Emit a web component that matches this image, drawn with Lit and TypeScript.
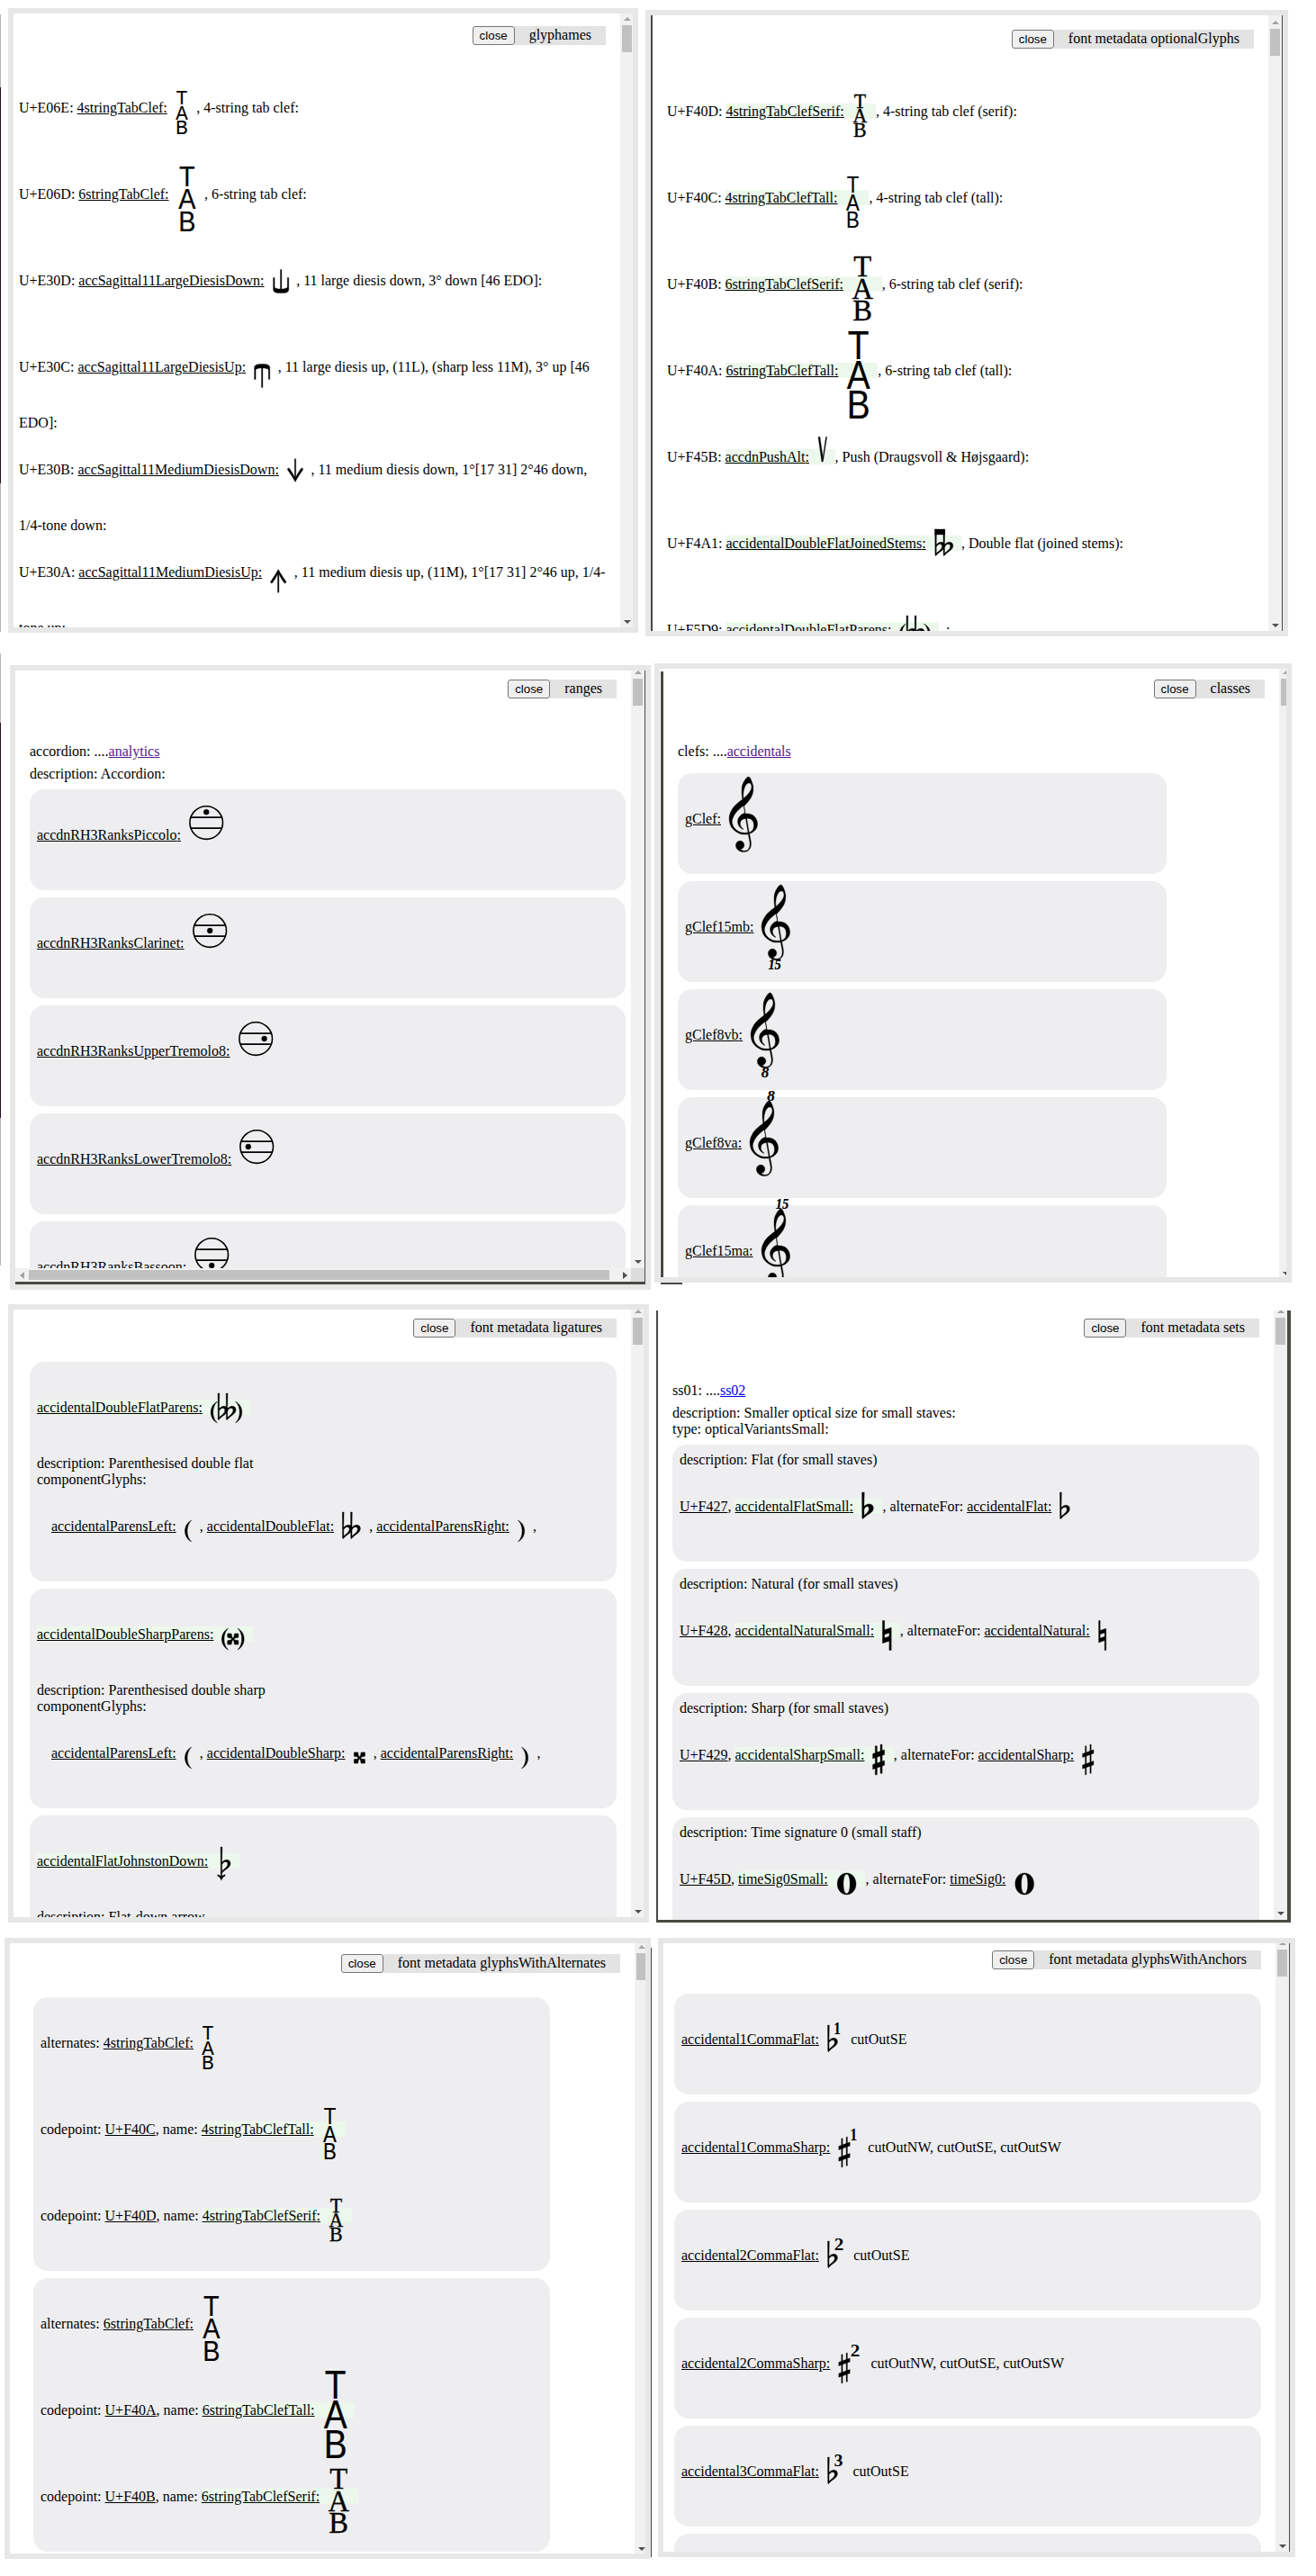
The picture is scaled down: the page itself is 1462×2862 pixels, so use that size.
import { LitElement, html, css, svg, nothing } from "lit";
import type { TemplateResult, SVGTemplateResult } from "lit";
import { customElement, property } from "lit/decorators.js";

type Art = SVGTemplateResult;
interface Glyph { w: number; art: Art; }

const at = (x: number, art: Art, extra = "") =>
  svg`<g transform=${`translate(${x} 0) ${extra}`}>${art}</g>`;

/* ---- primitive shapes: y = 0 is the text baseline ---- */
const flat = svg`<path fill-rule="evenodd" d="M0.1 -21H1.9L1.6 -3.9C3 -5.6 4.9 -6.7 6.9 -6.7C9.4 -6.7 11 -5.1 11 -2.7C11 2.2 4.8 4 1.7 7.9C1.1 8.7 0.4 8.6 0.3 7.7ZM1.6 -1.4C2.8 -3.6 4.2 -4.5 5.6 -4.5C7.2 -4.5 7.9 -3.5 7.9 -1.9C7.9 1.2 4 3.6 1.7 5.8Z"/>`;
const flatSmall = svg`<path fill-rule="evenodd" d="M0.2 -21H2.8L2.5 -5.2C4.2 -7.2 6 -8 8.2 -8C11 -8 13 -6 13 -3.4C13 2 6 3.4 2.4 7.4C1.4 8.6 0.5 8.6 0.4 7.5ZM2.5 -1.8C3.4 -4 4.6 -5.2 6 -5.2C7.4 -5.2 8 -4.2 8 -2.6C8 0.4 4.6 2.8 2.6 4.6Z"/>`;
const doubleFlat = svg`${flat}${at(9.2, flat)}`;
const joinedFlat = svg`${doubleFlat}<rect x="0.1" y="-21" width="11" height="6"/>`;
const paren = svg`<path d="M7 -11.8C-2.4 -7.2 -2.4 7.2 7 11.8C0.9 6.6 0.9 -6.6 7 -11.8Z" stroke-width=".5"/>`;
const parenRight = at(7, paren, "scale(-1 1)");
const doubleSharp = svg`<path d="M-6 -6H-2.2C-1.7 -6 -1.6 -5.8 -1.6 -5.2C-1.6 -3.2 -0.9 -1.9 0 -0.9C0.9 -1.9 1.6 -3.2 1.6 -5.2C1.6 -5.8 1.7 -6 2.2 -6H6V-2.2C6 -1.7 5.8 -1.6 5.2 -1.6C3.2 -1.6 1.9 -0.9 0.9 0C1.9 0.9 3.2 1.6 5.2 1.6C5.8 1.6 6 1.7 6 2.2V6H2.2C1.7 6 1.6 5.8 1.6 5.2C1.6 3.2 0.9 1.9 0 0.9C-0.9 1.9 -1.6 3.2 -1.6 5.2C-1.6 5.8 -1.7 6 -2.2 6H-6V2.2C-6 1.7 -5.8 1.6 -5.2 1.6C-3.2 1.6 -1.9 0.9 -0.9 0C-1.9 -0.9 -3.2 -1.6 -5.2 -1.6C-5.8 -1.6 -6 -1.7 -6 -2.2Z" stroke-width=".6"/>`;
const johnstonDown = svg`${at(4, flat)}<path d="M4.9 6V14.6M0.6 10.4C2.6 10.8 4 12 4.9 14.4C5.8 12 7.2 10.8 9.2 10.4" fill="none" stroke-width="1.6"/>`;
const natural = svg`<path fill-rule="evenodd" d="M0.2 -16.4H1.8V-5.4L8.4 -7.8V16.4H6.8V5.6L0.2 8ZM1.8 -1.2L6.8 -3V1.3L1.8 3.1Z"/>`;
const naturalSmall = svg`<path fill-rule="evenodd" d="M0 -16.4H2.3V-6.2L9.8 -8.8V16.4H7.5V6.2L0 8.8ZM2.3 -1L7.5 -2.8V1L2.3 2.8Z"/>`;
const sharp = svg`<path d="M0 -6.6L12.4 -11V-6.9L0 -2.4ZM0 6L12.4 1.6V5.8L0 10.2ZM3 -15.2H4.3V16.8H3ZM8.3 -16.8H9.6V15.2H8.3Z"/>`;
const sharpSmall = svg`<path d="M0 -6.6L13 -11V-5.6L0 -1.2ZM0 5.4L13 1V6.2L0 10.8ZM2.7 -15.2H4.8V16.8H2.7ZM8.4 -16.8H10.5V15.2H8.4Z"/>`;
const zero = svg`<path fill-rule="evenodd" d="M10.4 -12C16.4 -12 20.8 -6.8 20.8 0S16.4 12 10.4 12S0 6.8 0 0S4.4 -12 10.4 -12ZM10.4 -10.8C8 -10.8 6.8 -6 6.8 0S8 10.8 10.4 10.8S14 6 14 0S12.8 -10.8 10.4 -10.8Z"/>`;

const clef = svg`<path transform="scale(.048 -.048)" stroke-width="8" fill-rule="evenodd" d="M441 -245c-23 -4 -48 -6 -76 -6c-59 0 -102 7 -130 20c-88 42 -150 93 -187 154c-26 44 -43 103 -48 176c0 6 -1 13 -1 19c0 54 15 111 45 170c29 57 65 106 110 148s96 85 153 127c-3 16 -8 46 -13 92c-4 43 -5 73 -5 89c0 117 16 172 69 257c34 54 64 82 89 82c21 0 43 -30 69 -92s39 -115 41 -159v-15c0 -109 -21 -162 -67 -241c-20 -33 -61 -84 -123 -150c-7 -7 -14 -15 -21 -22l30 -177c11 1 21 2 32 2c54 0 103 -12 142 -36c60 -40 96 -103 103 -179c1 -10 2 -20 2 -29c0 -107 -80 -184 -186 -220c20 -110 38 -170 38 -235c0 -115 -65 -188 -165 -188c-110 0 -190 68 -190 153c0 60 42 105 97 105c55 0 98 -42 98 -97c0 -52 -35 -92 -85 -97c22 -25 50 -38 85 -38c80 0 132 60 132 160c0 55 -20 120 -38 227zM461 939c-95 0 -135 -175 -135 -286c0 -24 2 -48 5 -71c50 39 92 82 127 128c40 53 60 100 60 140v8c-4 53 -22 81 -55 81h-2zM406 119l54 -326c73 25 110 78 110 161c0 7 0 15 -1 23c-7 95 -57 142 -151 142h-12zM382 117c-72 -2 -128 -47 -128 -120v-7c2 -46 43 -99 75 -115c-3 -2 -7 -5 -10 -10c-70 33 -116 88 -123 172v11c0 68 44 126 88 159c23 17 49 29 78 36l-29 170c-21 -13 -52 -37 -92 -73c-50 -44 -86 -84 -109 -119c-45 -69 -67 -130 -67 -182v-5c5 -68 35 -127 93 -176s125 -73 203 -73c25 0 50 3 75 9c-19 111 -36 221 -54 327z"/>`;

const label = (cls: string, size: number, cx: number, y: number, t: string, sx = 1) =>
  svg`<text class=${cls} font-size=${size} text-anchor="middle" transform=${`translate(${cx} ${y}) scale(${sx} 1)`}>${t}</text>`;
const tab = (cls: string, size: number, cx: number, ys: number[], sx: number) =>
  svg`${["T", "A", "B"].map((t, i) => label(cls, size, cx, ys[i], t, sx))}`;

const largeDown = svg`<path d="M0 -8.4H1.5V1.6C1.5 3.4 3.4 3.9 7.9 4.1V-17.4H9.3V4.1C13.8 3.9 15.7 3.4 15.7 1.6V-8.4H17.2V4.4C17.2 7.6 14.6 8.6 8.6 8.6S0 7.6 0 4.4Z"/>`;
const mediumDown = svg`<path d="M7.9 -17.2H9.3V3.2C11.2 -0.8 13.4 -4.6 15.8 -7.2L17.5 -5.8C15 -2 11 3.6 8.6 8.4C6.2 3.6 2.2 -2 -0.3 -5.8L1.4 -7.2C3.8 -4.6 6 -0.8 7.9 3.2Z"/>`;

const ranks = (dx: number, dy: number): Glyph => ({
  w: 60,
  art: svg`<circle cx="28.2" cy="-18.9" r="18.3" fill="none" stroke-width="1.6"/>
    <path d="M11 -24.9H45.4M11 -12.9H45.4" stroke-width="1.6"/>
    <circle cx=${dx} cy=${dy} r="3"/>`,
});
const g = (w: number, x: number, art: Art, more: Art | typeof nothing = nothing): Glyph =>
  ({ w, art: svg`${at(x, art)}${more}` });

const G: Record<string, Glyph> = {
  "4stringTabClef": { w: 32.4, art: tab("sans", 22, 15.9, [-8.8, 7.8, 24.5], 0.92) },
  "6stringTabClef": { w: 39.5, art: tab("sans", 32, 19.8, [-14.3, 10.9, 36], 0.9) },
  "4stringTabClefSerif": { w: 35.2, art: tab("serif", 23, 17.3, [-8.8, 7.3, 23.3], 0.95) },
  "4stringTabClefTall": { w: 35, art: tab("sans", 25.2, 17.4, [-10.6, 8.5, 27.5], 0.88) },
  "6stringTabClefSerif": { w: 42.8, art: tab("serif", 33.6, 21.2, [-14.3, 10.7, 34.8], 0.97) },
  "6stringTabClefTall": { w: 44, art: tab("sans", 44.7, 22.7, [-18.5, 14.8, 48.4], 0.87) },
  accSagittal11LargeDiesisDown: g(35.6, 9.6, largeDown),
  accSagittal11LargeDiesisUp: { w: 35.6, art: at(9.6, largeDown, "scale(1 -1)") },
  accSagittal11MediumDiesisDown: g(35.6, 9.4, mediumDown),
  accSagittal11MediumDiesisUp: { w: 35.6, art: at(9.6, mediumDown, "scale(1 -1)") },
  accdnPushAlt: g(28.6, 9.8, svg`<path d="M0.2 -27.6H2.1L5.4 -5L8.7 -27.6H9.9L5.5 0H4.1Z"/>`),
  accidentalDoubleFlatJoinedStems: g(39.4, 9.6, joinedFlat),
  accidentalDoubleFlatParens: g(52.6, 9.3, svg`${paren}${at(7.6, doubleFlat)}${at(27.4, parenRight)}`),
  accidentalDoubleSharpParens: g(43.8, 9.5, svg`${paren}${at(12.3, doubleSharp)}${at(17.6, parenRight)}`),
  accidentalFlatJohnstonDown: g(34.5, 10, johnstonDown),
  accidentalParensLeft: g(26.2, 9.6, paren),
  accidentalParensRight: g(26.2, 9.6, parenRight),
  accidentalDoubleFlat: g(39.2, 9.2, doubleFlat),
  accidentalDoubleSharp: g(31.2, 15.4, doubleSharp),
  accidentalFlatSmall: g(32.4, 9.4, flatSmall),
  accidentalFlat: g(32, 9.4, flat),
  accidentalNaturalSmall: g(28.6, 9.4, naturalSmall),
  accidentalNatural: g(28, 9.4, natural),
  accidentalSharpSmall: g(32.4, 9.6, sharpSmall),
  accidentalSharp: g(32, 9.6, sharp),
  timeSig0Small: g(41.8, 10.2, zero),
  timeSig0: g(41.8, 10.8, zero),
  accidental1CommaFlat: g(35.4, 9.4, flat, label("num", 19, 20, -10.6, "1", 0.85)),
  accidental1CommaSharp: g(42, 9.8, sharp, label("num", 19, 26.2, -12.8, "1", 0.85)),
  accidental2CommaFlat: g(38.4, 9.4, flat, label("num", 19, 22, -11.2, "2", 1.12)),
  accidental2CommaSharp: g(45.2, 9.8, sharp, label("num", 19, 28, -12.8, "2", 1.12)),
  accidental3CommaFlat: g(37.6, 9.4, flat, label("num", 19, 21.5, -11, "3", 1.05)),
  gClef: g(50, 9.1, clef),
  gClef15mb: g(50, 9.1, clef, label("oct", 17, 23.6, 41.8, "15", 0.85)),
  gClef8vb: g(50, 9.1, clef, label("oct", 17, 25, 41.8, "8")),
  gClef8va: g(50, 9.1, clef, label("oct", 17, 32.4, -52, "8")),
  gClef15ma: g(50, 9.1, clef, label("oct", 17, 32, -52, "15", 0.85)),
  accdnRH3RanksPiccolo: ranks(28.2, -30.8),
  accdnRH3RanksClarinet: ranks(28.2, -19),
  accdnRH3RanksUpperTremolo8: ranks(37.6, -19),
  accdnRH3RanksLowerTremolo8: ranks(18.8, -19),
  accdnRH3RanksBassoon: ranks(28.2, -7),
};

const pic = (name: string) => {
  const q = G[name];
  return html`<svg class="glyph" width=${q.w} height="96" viewBox=${`0 -48 ${q.w} 96`}>${q.art}</svg>`;
};
const ref = (name: string) => html`<a class="ref">${name}:</a>${pic(name)}`;
const opt = (name: string) => html`<span class="optional">${ref(name)}</span>`;
const u = (code: string) => html`<a class="ref">${code}</a>`;

@customElement("glyph-window")
class GlyphWindow extends LitElement {
  @property() heading = "";
  @property({ type: Boolean }) horizontal = false;

  static styles = css`
    :host { display: flex; flex: none; box-sizing: border-box; overflow: hidden; background: #fff;
      font: 16px/18px "Liberation Serif", serif; color: #000; }
    .main { flex: 1; min-width: 0; display: flex; flex-direction: column; box-sizing: border-box;
      border: 0 solid #4a4944; border-right-width: var(--line-right, 0); border-bottom-width: var(--line-bottom, 0); }
    .view { flex: 1; min-height: 0; display: flex; }
    .pane { flex: 1; min-width: 0; overflow: hidden; padding: var(--top) var(--right) 0 var(--left);
      margin: var(--edge-top, 0) 0 0 var(--edge-left, 0); border-left: var(--edge, 0) solid #4a4944; }
    .head { display: flex; justify-content: flex-end; height: 21px; margin-bottom: var(--gap); margin-right: var(--head-right, 0); }
    button { box-sizing: border-box; width: 47px; height: 21px; padding: 0; border: 1px solid #767676;
      border-radius: 3px; background: #efefef; color: #000; font: 13.333px/18px "Liberation Sans", sans-serif; }
    .title { padding: 0 16px; background: #e3e3e3; line-height: 20px; white-space: nowrap; }
    .bar { flex: none; width: var(--bar, 14px); box-sizing: border-box; display: flex; flex-direction: column;
      align-items: flex-start; background: #f1f1f1; overflow: hidden; padding: 0 0 var(--bar-bottom, 4px); }
    .up, .down { flex: none; width: 15px; display: flex; justify-content: center; }
    .up { height: 12px; margin-top: var(--bar-top, 1px); }
    .up svg, .down svg { display: block; margin-top: 3px; }
    .thumb { flex: none; width: 11px; height: 30px; margin-left: 2px; background: #c1c1c1; }
    .grow { flex: 1; }
    .hbar { flex: none; height: 15px; display: flex; align-items: center; background: #f1f1f1; }
    .hthumb { flex: none; width: 645px; height: 11px; margin-left: 5px; background: #c1c1c1; }
    .left { margin-left: 5px; }
    .right { margin-left: 15px; }
    .corner { width: 15px; height: 15px; margin-left: auto; background: #dcdcdc; }
  `;

  render() {
    return html`<div class="main">
      <div class="view">
        <div class="pane">
          <div class="head"><button>close</button><span class="title">${this.heading}</span></div>
          <slot></slot>
        </div>
        <div class="bar">
          <div class="up"><svg width="8" height="4"><path d="M0 4L4 0L8 4Z" fill="#a3a3a3"/></svg></div>
          <div class="thumb"></div>
          <div class="grow"></div>
          <div class="down"><svg width="8" height="4"><path d="M0 0L4 4L8 0Z" fill="#505050"/></svg></div>
        </div>
      </div>
      ${this.horizontal ? html`<div class="hbar">
        <svg class="left" width="5" height="8"><path d="M5 0L0 4L5 8Z" fill="#a3a3a3"/></svg>
        <div class="hthumb"></div>
        <svg class="right" width="5" height="8"><path d="M0 0L5 4L0 8Z" fill="#505050"/></svg>
        <div class="corner"></div></div>` : nothing}
    </div>`;
  }
}

@customElement("app-root")
class AppRoot extends LitElement {
  static styles = css`
    :host { display: block; width: 1462px; height: 2862px; overflow: hidden; background: #fff;
      font: 16px/18px "Liberation Serif", serif; color: #000; }
    .row { display: flex; align-items: flex-start; height: 720px; }
    .row.third { height: 705px; }
    .row.last { height: 717px; }
    .strip { flex: none; width: 1px; height: 686px; margin-top: 16px;
      background: linear-gradient(#b5b3b8 81px, #2b0d24 81px 521px, #b5b3b8 521px); }
    .strip.short { margin-top: 6px; height: 680px;
      background: linear-gradient(#b5b3b8 77px, #2b0d24 77px 516px, #b5b3b8 516px); }

    .w { border: 6px solid #e7e7e7; }
    .names { width: 700px; height: 694px; margin: 9px 0 0 8px; --top: 14px; --left: 6px; --right: 16px; --gap: 27px; }
    .optionals { width: 714px; height: 696px; margin: 11px 0 0 8px; --top: 16px; --left: 16px; --right: 16px; --gap: 27px;
      --edge: 2px; --bar: 15px; --bar-top: 3px; --line-right: 1px; }
    .ranges { width: 712px; height: 694px; margin: 19px 0 0 10px; --top: 10px; --left: 16px; --right: 6px; --head-right: 10px;
      --gap: 50px; --bar: 15px; --bar-top: -3px; --bar-bottom: 5px; --line-right: 1px; --line-bottom: 3px; }
    .classes { width: 708px; height: 688px; margin: 17px 0 0 4px; --top: 9px; --left: 16px; --right: 16px; --gap: 50px;
      --edge: 3px; --edge-left: 1px; --edge-top: 3px; --bar: 8px; --bar-top: -1px; --bar-bottom: 2px; }
    .ligatures { width: 712px; height: 687px; margin: 9px 0 0 9px; --top: 10px; --left: 18px; --right: 16px; --gap: 27px; --bar-top: -3px; }
    .sets { width: 705px; height: 680px; margin: 16px 0 0 8px; border: solid #4a4944; border-width: 0 4px 3px 2px;
      --top: 9px; --left: 16px; --right: 16px; --gap: 50px; --bar: 15px; --bar-top: -4px; --bar-bottom: 5px; }
    .alternates { width: 718px; height: 690px; margin: 8px 0 0 5px; --top: 12px; --left: 26px; --right: 16px; --gap: 27px;
      --bar: 12px; --bar-top: -1px; --bar-bottom: 3px; }
    .anchors { width: 708px; height: 688px; margin: 8px 0 0 8px; --top: 8px; --left: 12px; --right: 16px; --gap: 27px;
      --bar: 15px; --bar-top: -5px; --bar-bottom: 4px; --line-right: 1px; }
    .seam { flex: none; width: 1px; height: 677px; margin: 19px -1px 0 0; background: #4a4944; }

    .card { background: #eeeef0; border-radius: 16px; padding: 8px; margin-bottom: 8px; }
    .classes .card { width: 527px; }
    .alternates .card { width: 558px; }
    .para { margin-bottom: 7px; }
    .para.loose { margin-bottom: 15px; }
    .para.close { margin-bottom: 8px; }
    .indent { padding-left: 16px; }
    .ref { color: inherit; text-decoration: underline; }
    .optional { background: #ecf8ec; }
    .visited { color: #551a8b; text-decoration: underline; }
    .link { color: #0000ee; text-decoration: underline; }
    .glyph { vertical-align: -48px; overflow: visible; stroke: #000; stroke-width: 0.35px; }
    .sans { font-family: "Liberation Sans", sans-serif; stroke-width: 0.2px; }
    .serif { font-family: "Liberation Serif", serif; stroke-width: 0.4px; }
    .num { font-family: "Liberation Serif", serif; font-weight: bold; stroke: none; }
    .oct { font-family: "Liberation Serif", serif; font-weight: bold; font-style: italic; stroke-width: 0.2px; }
    .dash { width: 24px; height: 2px; background: #4a4944; margin-left: 11px; }
    .stack { display: flex; flex-direction: column; flex: none; }
  `;

  private line(code: string, glyph: TemplateResult, text: string) {
    return html`<div>${code}: ${glyph}, ${text}:</div>`;
  }
  private ligature(name: string, about: string, parts: string[]) {
    return html`<div class="card"><div>${opt(name)}</div><div>description: ${about}</div><div>componentGlyphs:</div>
      <div class="indent">${parts.map((p) => html`${ref(p)}, `)}</div></div>`;
  }
  private setCard(about: string, code: string, small: string, base: string) {
    return html`<div class="card"><div>description: ${about}</div><div>${u(code)}, ${opt(small)}, alternateFor: ${ref(base)}</div></div>`;
  }
  private alternate(name: string, alts: [string, string][]) {
    return html`<div class="card"><div>alternates: ${ref(name)}</div>
      ${alts.map(([c, n]) => html`<div>codepoint: ${u(c)}, name: ${opt(n)}</div>`)}</div>`;
  }

  render() {
    const ranksNames = ["Piccolo", "Clarinet", "UpperTremolo8", "LowerTremolo8", "Bassoon"];
    const clefs = ["gClef", "gClef15mb", "gClef8vb", "gClef8va", "gClef15ma"];
    const anchors: [string, string][] = [
      ["accidental1CommaFlat", "cutOutSE"],
      ["accidental1CommaSharp", "cutOutNW, cutOutSE, cutOutSW"],
      ["accidental2CommaFlat", "cutOutSE"],
      ["accidental2CommaSharp", "cutOutNW, cutOutSE, cutOutSW"],
      ["accidental3CommaFlat", "cutOutSE"],
    ];
    return html`
      <div class="row">
        <div class="strip"></div>
        <glyph-window class="w names" heading="glyphames">
          ${this.line("U+E06E", ref("4stringTabClef"), "4-string tab clef")}
          ${this.line("U+E06D", ref("6stringTabClef"), "6-string tab clef")}
          ${this.line("U+E30D", ref("accSagittal11LargeDiesisDown"), "11 large diesis down, 3° down [46 EDO]")}
          ${this.line("U+E30C", ref("accSagittal11LargeDiesisUp"), "11 large diesis up, (11L), (sharp less 11M), 3° up [46 EDO]")}
          ${this.line("U+E30B", ref("accSagittal11MediumDiesisDown"), "11 medium diesis down, 1°[17 31] 2°46 down, 1/4-tone down")}
          ${this.line("U+E30A", ref("accSagittal11MediumDiesisUp"), "11 medium diesis up, (11M), 1°[17 31] 2°46 up, 1/4-tone up")}
        </glyph-window>
        <glyph-window class="w optionals" heading="font metadata optionalGlyphs">
          ${this.line("U+F40D", opt("4stringTabClefSerif"), "4-string tab clef (serif)")}
          ${this.line("U+F40C", opt("4stringTabClefTall"), "4-string tab clef (tall)")}
          ${this.line("U+F40B", opt("6stringTabClefSerif"), "6-string tab clef (serif)")}
          ${this.line("U+F40A", opt("6stringTabClefTall"), "6-string tab clef (tall)")}
          ${this.line("U+F45B", opt("accdnPushAlt"), "Push (Draugsvoll & Højsgaard)")}
          ${this.line("U+F4A1", opt("accidentalDoubleFlatJoinedStems"), "Double flat (joined stems)")}
          ${this.line("U+F5D9", opt("accidentalDoubleFlatParens"), "")}
        </glyph-window>
      </div>
      <div class="row">
        <div class="strip short"></div>
        <glyph-window class="w ranges" heading="ranges" horizontal>
          <div class="para">accordion: ....<a class="visited">analytics</a></div>
          <div class="para close">description: Accordion:</div>
          ${ranksNames.map((n) => html`<div class="card">${ref("accdnRH3Ranks" + n)}</div>`)}
        </glyph-window>
        <div class="stack">
          <glyph-window class="w classes" heading="classes">
            <div class="para loose">clefs: ....<a class="visited">accidentals</a></div>
            ${clefs.map((n) => html`<div class="card">${ref(n)}</div>`)}
          </glyph-window>
          <div class="dash"></div>
        </div>
      </div>
      <div class="row third">
        <glyph-window class="w ligatures" heading="font metadata ligatures">
          ${this.ligature("accidentalDoubleFlatParens", "Parenthesised double flat", ["accidentalParensLeft", "accidentalDoubleFlat", "accidentalParensRight"])}
          ${this.ligature("accidentalDoubleSharpParens", "Parenthesised double sharp", ["accidentalParensLeft", "accidentalDoubleSharp", "accidentalParensRight"])}
          ${this.ligature("accidentalFlatJohnstonDown", "Flat-down arrow", [])}
        </glyph-window>
        <glyph-window class="sets" heading="font metadata sets">
          <div class="para">ss01: ....<a class="link">ss02</a></div>
          <div>description: Smaller optical size for small staves:</div>
          <div class="para close">type: opticalVariantsSmall:</div>
          ${this.setCard("Flat (for small staves)", "U+F427", "accidentalFlatSmall", "accidentalFlat")}
          ${this.setCard("Natural (for small staves)", "U+F428", "accidentalNaturalSmall", "accidentalNatural")}
          ${this.setCard("Sharp (for small staves)", "U+F429", "accidentalSharpSmall", "accidentalSharp")}
          ${this.setCard("Time signature 0 (small staff)", "U+F45D", "timeSig0Small", "timeSig0")}
        </glyph-window>
      </div>
      <div class="row last">
        <glyph-window class="w alternates" heading="font metadata glyphsWithAlternates">
          ${this.alternate("4stringTabClef", [["U+F40C", "4stringTabClefTall"], ["U+F40D", "4stringTabClefSerif"]])}
          ${this.alternate("6stringTabClef", [["U+F40A", "6stringTabClefTall"], ["U+F40B", "6stringTabClefSerif"]])}
        </glyph-window>
        <div class="seam"></div>
        <glyph-window class="w anchors" heading="font metadata glyphsWithAnchors">
          ${anchors.map(([n, t]) => html`<div class="card">${ref(n)}${t}</div>`)}
          <div class="card">${ref("accidental3CommaFlat")}</div>
        </glyph-window>
      </div>`;
  }
}
